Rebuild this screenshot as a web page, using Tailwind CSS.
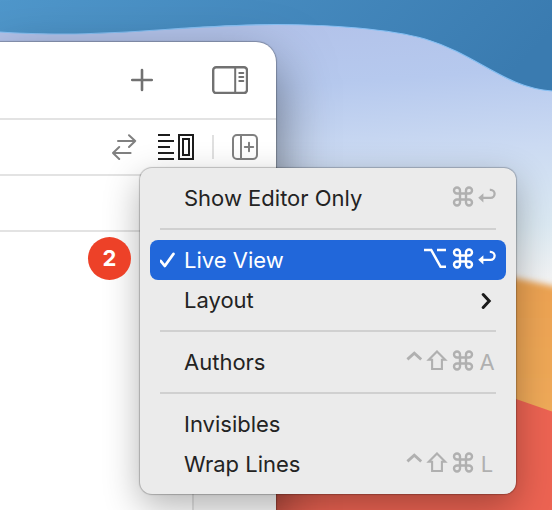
<!DOCTYPE html>
<html lang="en">
<head>
<meta charset="utf-8">
<meta name="viewport" content="width=device-width, initial-scale=1">
<title>Editor options</title>
<script src="https://cdn.jsdelivr.net/npm/@tailwindcss/browser@4"></script>
</head>
<body class="font-['Inter','Liberation_Sans',sans-serif]">
<!-- Shared key symbols -->
<svg class="hidden" aria-hidden="true">
  <symbol id="key-command" viewBox="0 0 22 24"><path d="M8 7.5V4.5a3 3 0 1 0-3 3H17a3 3 0 1 0-3-3V16.5a3 3 0 1 0 3-3H5a3 3 0 1 0 3 3Z" fill="none" stroke="currentColor" stroke-width="2.4"/></symbol>
  <symbol id="key-return" viewBox="0 0 18 24"><path d="M4 11.8H12.6a4 4 0 0 0 0-8H11.8" fill="none" stroke="currentColor" stroke-width="2.3"/><path d="M0.2 11.8L5.4 7.2V16.4Z" fill="currentColor"/></symbol>
  <symbol id="key-option" viewBox="0 0 24 24"><path d="M0 2H7.2L16.6 18.8H22M13 2H22" fill="none" stroke="currentColor" stroke-width="2.5"/></symbol>
  <symbol id="key-control" viewBox="0 0 16 24"><path d="M1.4 9.4L8.3 3.2L15.2 9.4" fill="none" stroke="currentColor" stroke-width="2.8"/></symbol>
  <symbol id="key-shift" viewBox="0 0 22 24"><path d="M11 1.4L19.2 9.7H15.9V19H6.1V9.7H2.8Z" fill="none" stroke="currentColor" stroke-width="2.1"/></symbol>
</svg>

<main class="relative isolate flex min-h-screen flex-col overflow-hidden pt-[42px]">
  <svg class="absolute inset-0 -z-10 h-full w-full" viewBox="0 0 552 510" preserveAspectRatio="none" aria-hidden="true">
    <defs>
      <linearGradient id="sea" x1="0" y1="0" x2="1" y2="0.15"><stop offset="0" stop-color="#5098cc"/><stop offset="1" stop-color="#3a7bb0"/></linearGradient>
      <linearGradient id="sky" gradientUnits="userSpaceOnUse" x1="380" y1="20" x2="400" y2="290"><stop offset="0" stop-color="#b3c3ea"/><stop offset="0.22" stop-color="#b6c9ee"/><stop offset="0.5" stop-color="#cbdaf2"/><stop offset="0.8" stop-color="#dbe9f2"/><stop offset="1" stop-color="#f2f3f4"/></linearGradient>
      <linearGradient id="sand" x1="0" y1="0" x2="0" y2="1"><stop offset="0" stop-color="#eba14f"/><stop offset="1" stop-color="#f3b062"/></linearGradient>
      <filter id="soft" x="-10%" y="-10%" width="120%" height="120%"><feGaussianBlur stdDeviation="3"/></filter>
    </defs>
    <rect y="20" width="552" height="280" fill="url(#sky)"/>
    <path d="M-20 -5H572V91H552C505 88 478 55 425 39C390 29 330 24.500 276 24.500C190 25 140 34 65 34C40 34 15 33 0 32H-20Z" fill="url(#sea)"/>
    <path d="M552 91C505 88 478 55 425 39C390 29 330 24.500 276 24.500C190 25 140 34 65 34C40 34 15 33 0 32" fill="none" stroke="#86c0f4" stroke-width="1.2"/>
    <path d="M240 250Q420 257 516 278L580 292V530H240Z" fill="url(#sand)" filter="url(#soft)"/>
    <path d="M240 330Q420 364 516 399L552 411.500V510H240Z" fill="#ec6352"/>
  </svg>

  <section class="flex w-1/2 grow flex-col rounded-tr-[20px] bg-white shadow-[0_0_1px_1px_rgba(0,0,0,0.25),0_24px_56px_rgba(0,0,0,0.5)]" aria-label="Editor window">
    <header class="flex h-[78px] items-center justify-end gap-[59px] border-b-2 border-[#e3e3e3] pr-7 text-[#717171]">
      <button aria-label="Add">
        <svg class="block" width="22" height="24" viewBox="0 0 22 24" fill="none" stroke="currentColor" stroke-width="2.600" stroke-linecap="round"><path d="M1.200 12H20.800M11 2V22"/></svg>
      </button>
      <button aria-label="Toggle inspector">
        <svg class="block" width="36" height="28" viewBox="0 0 36 28" fill="none" stroke="currentColor" stroke-width="2.400"><rect x="1.200" y="1.200" width="33.800" height="25.800" rx="3"/><path d="M23.200 1V27" stroke-width="2"/><path d="M27.300 7H31.300M27.300 11H31.300M27.300 15H31.300" stroke-width="2" stroke-linecap="round"/></svg>
      </button>
    </header>
    <div class="flex h-14 items-center justify-end gap-[18px] border-b-2 border-[#e3e3e3] pr-[18px] text-[#808080]">
      <button aria-label="Code review">
        <svg class="block" width="28" height="26" viewBox="0 0 28 26" fill="none" stroke="currentColor" stroke-width="2" stroke-linecap="round" stroke-linejoin="round"><path d="M6 7H23.200M17 1.200L23.200 7L17 13M18.600 19H1M7.200 13L1 19L7.200 25"/></svg>
      </button>
      <button class="text-[#1c1c1c]" aria-label="Editor options">
        <svg class="block" width="36" height="26" viewBox="0 0 36 26" fill="none" stroke="currentColor" stroke-width="2"><path d="M0 1H12M0 7H16M0 13H12M0 19H16M0 25H16"/><rect x="21" y="1" width="14" height="24"/><rect x="25" y="5" width="6" height="16"/></svg>
      </button>
      <span class="h-6 w-0.5 bg-[#e0e0e0]"></span>
      <button aria-label="Add editor">
        <svg class="block" width="26" height="26" viewBox="0 0 26 26" fill="none" stroke="currentColor" stroke-width="2"><rect x="1" y="1" width="24" height="24" rx="4"/><path d="M9 1V25"/><path d="M12.800 13H21.200M17 8.800V17.200" stroke-linecap="round"/></svg>
      </button>
    </div>
    <div class="h-14 border-b-2 border-[#e3e3e3]"></div>
    <div class="flex grow justify-end">
      <div class="w-[84px] border-l-2 border-[#e3e3e3] bg-[#fafafa]"></div>
    </div>
  </section>

  <span class="absolute top-[237px] left-[88px] z-10 flex size-[43px] items-center justify-center rounded-full bg-[#ed4128] text-[22px] font-bold text-white">2</span>

  <ul role="menu" class="absolute top-[168px] right-9 left-[140px] rounded-[12px] bg-[#ebebeb] p-2.5 text-[22px] leading-10 text-[#232323] shadow-[0_0_1px_1px_rgba(0,0,0,0.22),0_12px_36px_rgba(0,0,0,0.3)]">
    <li><button role="menuitem" class="flex h-10 w-full items-center px-2.5">
      <span class="w-6"></span><span>Show Editor Only</span>
      <span class="ml-auto flex items-center gap-1 text-[#b0b0b0]"><svg class="h-6 w-[22px]"><use href="#key-command"/></svg><svg class="h-6 w-[18px]"><use href="#key-return"/></svg></span>
    </button></li>
    <li role="separator" class="mx-2.5 my-2.5 h-0.5 bg-[#d0d0d0]"></li>
    <li><button role="menuitemcheckbox" aria-checked="true" class="flex h-10 w-full items-center rounded-lg bg-[#2167da] px-2.5 text-white">
      <span class="w-6"><svg class="block" width="16" height="16" viewBox="0 0 16 16" fill="none" stroke="currentColor" stroke-width="2.800" stroke-linecap="round" stroke-linejoin="round"><path d="M0.800 9L4.800 14L13.400 2"/></svg></span><span>Live View</span>
      <span class="ml-auto flex items-center gap-1"><svg class="h-6 w-6"><use href="#key-option"/></svg><svg class="h-6 w-[22px]"><use href="#key-command"/></svg><svg class="h-6 w-[18px]"><use href="#key-return"/></svg></span>
    </button></li>
    <li><button role="menuitem" aria-haspopup="true" class="flex h-10 w-full items-center px-2.5">
      <span class="w-6"></span><span>Layout</span>
      <svg class="ml-auto" width="16" height="18" viewBox="0 0 16 18" fill="none" stroke="#1a1a1a" stroke-width="3" stroke-linecap="round" stroke-linejoin="miter"><path d="M3.200 3.500L9.200 10L3.200 16.500"/></svg>
    </button></li>
    <li role="separator" class="mx-2.5 my-2.5 h-0.5 bg-[#d0d0d0]"></li>
    <li><button role="menuitem" class="flex h-10 w-full items-center px-2.5">
      <span class="w-6"></span><span>Authors</span>
      <span class="ml-auto flex items-center gap-1 text-[#b0b0b0]"><svg class="h-6 w-4"><use href="#key-control"/></svg><svg class="h-6 w-[22px]"><use href="#key-shift"/></svg><svg class="h-6 w-[22px]"><use href="#key-command"/></svg><span class="w-[18px] text-center">A</span></span>
    </button></li>
    <li role="separator" class="mx-2.5 my-2.5 h-0.5 bg-[#d0d0d0]"></li>
    <li><button role="menuitem" class="flex h-10 w-full items-center px-2.5">
      <span class="w-6"></span><span>Invisibles</span>
    </button></li>
    <li><button role="menuitem" class="flex h-10 w-full items-center px-2.5">
      <span class="w-6"></span><span>Wrap Lines</span>
      <span class="ml-auto flex items-center gap-1 text-[#b0b0b0]"><svg class="h-6 w-4"><use href="#key-control"/></svg><svg class="h-6 w-[22px]"><use href="#key-shift"/></svg><svg class="h-6 w-[22px]"><use href="#key-command"/></svg><span class="w-[18px] text-center">L</span></span>
    </button></li>
  </ul>
</main>
</body>
</html>
